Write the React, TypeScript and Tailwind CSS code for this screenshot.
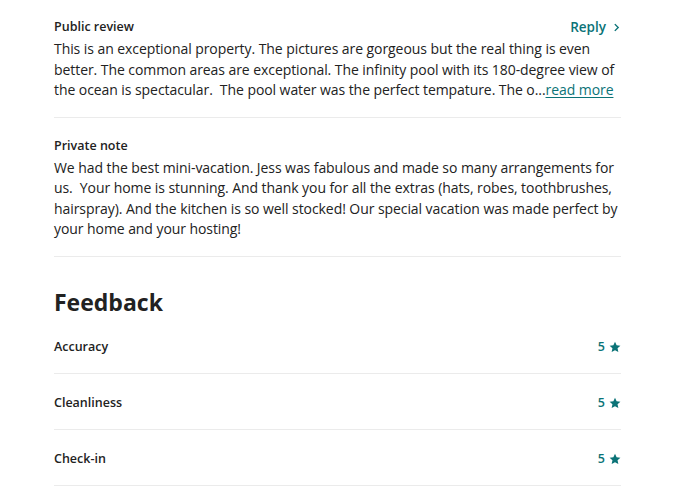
import React from 'react';

const ratings = [
  { label: 'Accuracy', value: 5 },
  { label: 'Cleanliness', value: 5 },
  { label: 'Check-in', value: 5 },
];

const Star = () => (
  <svg viewBox="0 0 24 24" className="h-[12px] w-[12px] fill-current">
    <path d="M12 1.5l3.2 7.1 7.6.8-5.7 5.2 1.6 7.6L12 18.3l-6.7 3.9 1.6-7.6L1.2 9.4l7.6-.8z" />
  </svg>
);

const Line = ({ children }: { children: React.ReactNode }) => (
  <span className="block whitespace-nowrap">{children}</span>
);

export default function App() {
  return (
    <div className="min-h-screen bg-white font-['Open_Sans',sans-serif] text-[#222222]">
      <div className="mx-[54px] pt-[18px]">
        <section className="border-b border-[#ebebeb] pb-[16px]">
          <div className="flex items-center justify-between">
            <h3 className="text-[12.5px] font-semibold leading-[18px]">Public review</h3>
            <button className="flex items-center gap-[6px] text-[13.5px] font-semibold leading-[18px] text-[#0b7377]">
              Reply
              <svg viewBox="0 0 16 16" className="h-[9px] w-[9px]" fill="none" stroke="currentColor" strokeWidth="2.5">
                <path d="M5 2l6 6-6 6" />
              </svg>
            </button>
          </div>
          <p className="mt-[3px] text-[14px] leading-[20.5px] tracking-[-0.07px]">
            <Line>This is an exceptional property. The pictures are gorgeous but the real thing is even</Line>
            <Line>better. The common areas are exceptional. The infinity pool with its 180-degree view of</Line>
            <Line>
              the ocean is spectacular.&nbsp; The pool water was the perfect tempature. The o...
              <a className="text-[#0b7377] underline underline-offset-2">read more</a>
            </Line>
          </p>
        </section>

        <section className="border-b border-[#ebebeb] pb-[16px] pt-[19px]">
          <h3 className="text-[12.5px] font-semibold leading-[18px]">Private note</h3>
          <p className="mt-[3px] text-[14px] leading-[20.5px] tracking-[-0.07px]">
            <Line>We had the best mini-vacation. Jess was fabulous and made so many arrangements for</Line>
            <Line>us.&nbsp; Your home is stunning. And thank you for all the extras (hats, robes, toothbrushes,</Line>
            <Line>hairspray). And the kitchen is so well stocked! Our special vacation was made perfect by</Line>
            <Line>your home and your hosting!</Line>
          </p>
        </section>

        <h2 className="mt-[31px] text-[23px] font-bold leading-[28px]">Feedback</h2>

        <ul className="mt-[2px]">
          {ratings.map((r) => (
            <li key={r.label} className="flex h-[56px] items-center justify-between border-b border-[#ebebeb] pt-[3px]">
              <span className="text-[12.5px] font-semibold leading-[18px]">{r.label}</span>
              <span className="flex items-center gap-[4px] text-[12.5px] font-semibold leading-[18px] text-[#0b7377]">
                {r.value}
                <Star />
              </span>
            </li>
          ))}
        </ul>
      </div>
    </div>
  );
}
